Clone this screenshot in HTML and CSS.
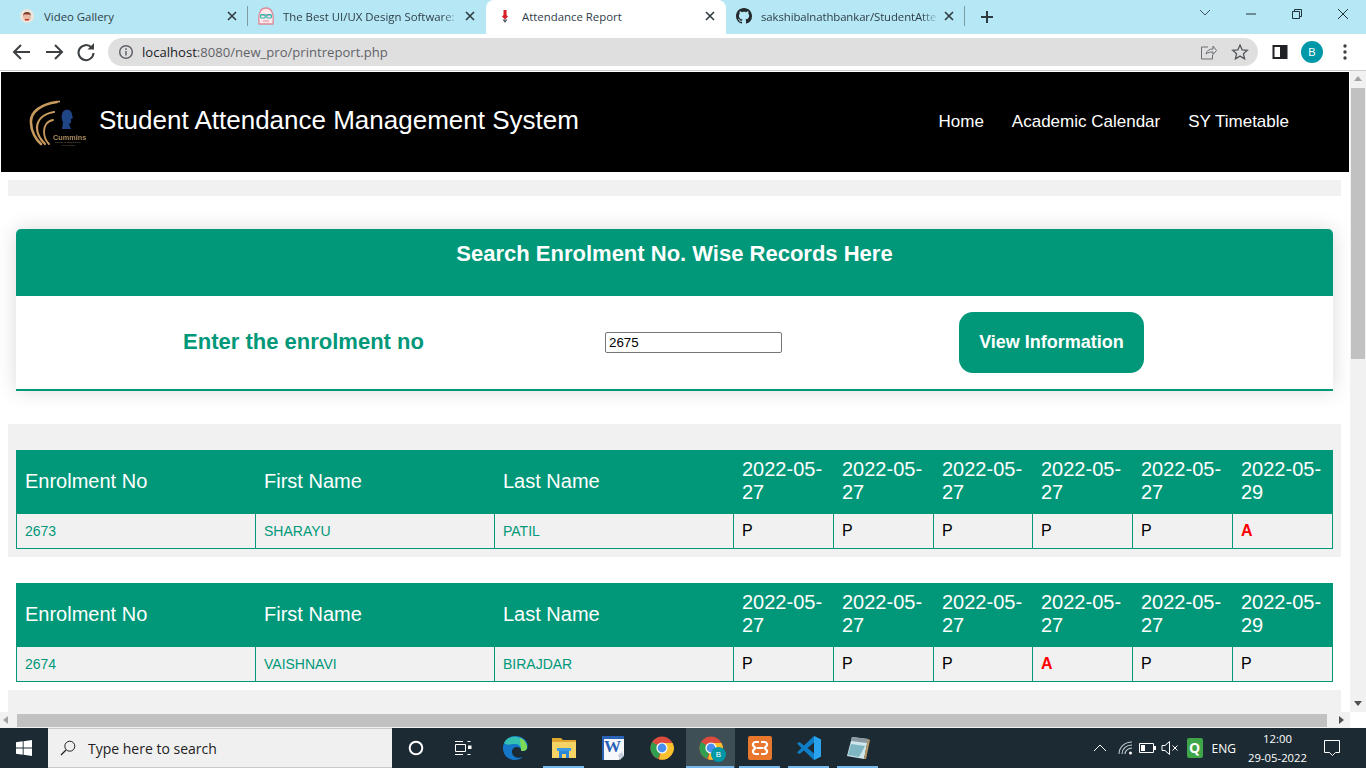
FILE: index.html
```html
<!DOCTYPE html>
<html lang="en">

<head>
    <meta charset="UTF-8">
    <title>Attendance Report</title>
    <link rel="stylesheet" href="styles.css">
</head>

<body>
    <svg class="defs" width="0" height="0">
        <symbol id="chrome" viewBox="0 0 24 24">
            <circle cx="12" cy="12" r="11.5" fill="#dd4b3e" />
            <path d="M12 12 2.2 6A11.5 11.5 0 0 0 8 22.8z" fill="#2f9e4f" />
            <path d="M12 7h10.6A11.5 11.5 0 0 1 9 23.2L12 12z" fill="#fbc02d" />
            <circle cx="12" cy="12" r="5.6" fill="#fff" />
            <circle cx="12" cy="12" r="4.4" fill="#4a8ef0" />
        </symbol>
        <symbol id="close" viewBox="0 0 10 10">
            <path d="M1 1 9 9M9 1 1 9" stroke="#2d3a40" stroke-width="1.6" fill="none" />
        </symbol>
    </svg>

    <!-- browser tabs -->
    <div class="tabstrip">
        <div class="tab tab-sep">
            <svg class="favicon" viewBox="0 0 16 16">
                <circle cx="8" cy="8" r="7" fill="#ece6dc" />
                <circle cx="8" cy="9" r="4" fill="#e9b9a4" />
                <path d="M4 8a4 4 0 0 1 8 0l-1-1.5H5z" fill="#7c3a28" />
                <rect x="6" y="11" width="4" height="1.4" fill="#c0392b" />
            </svg>
            <span class="tab-title">Video Gallery</span>
            <svg class="tab-close"><use href="#close" /></svg>
        </div>
        <div class="tab tab-two">
            <svg class="favicon favicon-big" viewBox="0 0 20 20">
                <path d="M3 18C2 8 4 2 10 2s8 6 7 16z" fill="#fbe9ec" stroke="#dc8b98" stroke-width="1.3" />
                <path d="M5 9h10" stroke="#dc8b98" stroke-width="1.2" />
                <rect x="4.6" y="8.6" width="4.6" height="3.4" rx="1" fill="none" stroke="#25b5b0" stroke-width="1.1" />
                <rect x="10.8" y="8.6" width="4.6" height="3.4" rx="1" fill="none" stroke="#25b5b0" stroke-width="1.1" />
                <path d="M7 15h6" stroke="#dc8b98" />
            </svg>
            <span class="tab-title tab-fade">The Best UI/UX Design Software:</span>
            <svg class="tab-close"><use href="#close" /></svg>
        </div>
        <div class="tab tab-active">
            <svg class="favicon" viewBox="0 0 16 16">
                <path d="M6.5 2h3v5l1.5 1.5-3 3-3-3L6.500 7z" fill="#d81f2a" />
                <path d="M5.500 11.500h5L8 15z" fill="#55606a" />
            </svg>
            <span class="tab-title">Attendance Report</span>
            <svg class="tab-close"><use href="#close" /></svg>
        </div>
        <div class="tab tab-sep">
            <svg class="favicon" viewBox="0 0 16 16">
                <path fill="#24292e" d="M8 0C3.58 0 0 3.58 0 8c0 3.54 2.29 6.53 5.47 7.59.4.07.55-.17.55-.38 0-.19-.01-.82-.01-1.49-2.01.37-2.53-.49-2.69-.94-.09-.23-.48-.94-.82-1.13-.28-.15-.68-.52-.01-.53.63-.01 1.08.58 1.23.82.72 1.21 1.87.87 2.33.66.07-.52.28-.87.51-1.07-1.78-.2-3.64-.89-3.64-3.95 0-.87.31-1.59.82-2.15-.08-.2-.36-1.02.08-2.12 0 0 .67-.21 2.2.82.64-.18 1.32-.27 2-.27.68 0 1.36.09 2 .27 1.53-1.04 2.2-.82 2.2-.82.44 1.1.16 1.92.08 2.12.51.56.82 1.27.82 2.15 0 3.07-1.87 3.75-3.65 3.95.29.25.54.73.54 1.48 0 1.07-.01 1.93-.01 2.2 0 .21.15.46.55.38A8.013 8.013 0 0 0 16 8c0-4.42-3.58-8-8-8z" />
            </svg>
            <span class="tab-title tab-fade tab-tight">sakshibalnathbankar/StudentAtte</span>
            <svg class="tab-close"><use href="#close" /></svg>
        </div>
        <svg class="new-tab" viewBox="0 0 14 14">
            <path d="M7 1v12M1 7h12" stroke="#2d3a40" stroke-width="2" fill="none" />
        </svg>
        <div class="win-controls">
            <svg viewBox="0 0 46 20"><path d="M18 6l5 5 5-5" stroke="#40525a" fill="none" /></svg>
            <svg viewBox="0 0 46 20"><path d="M18 10h10" stroke="#22333b" fill="none" /></svg>
            <svg viewBox="0 0 46 20"><path d="M18.500 7.500h7v7h-7zM20.500 7.500v-2h7v7h-2" stroke="#22333b" fill="none" /></svg>
            <svg viewBox="0 0 46 20"><path d="M18 5l10 10M28 5 18 15" stroke="#22333b" fill="none" /></svg>
        </div>
    </div>

    <!-- address bar -->
    <div class="toolbar">
        <svg class="tool" viewBox="0 0 32 32"><path d="M24 16H9M15 9l-7 7 7 7" stroke="#3c4043" stroke-width="2" fill="none" /></svg>
        <svg class="tool" viewBox="0 0 32 32"><path d="M8 16h15M17 9l7 7-7 7" stroke="#3c4043" stroke-width="2" fill="none" /></svg>
        <svg class="tool" viewBox="0 0 32 32"><path d="M21.500 11.500A7.500 7.500 0 1 0 23.500 17" stroke="#3c4043" stroke-width="2" fill="none" /><path d="M17.500 13.500h6.500V7z" fill="#3c4043" /></svg>
        <div class="omnibox">
            <svg class="info" viewBox="0 0 16 16">
                <circle cx="8" cy="8" r="6.300" stroke="#5f6368" stroke-width="1.500" fill="none" />
                <path d="M8 7v4.500M8 4.300v1.600" stroke="#5f6368" stroke-width="1.500" />
            </svg>
            <span class="url">localhost<span class="url-dim">:8080/new_pro/printreport.php</span></span>
            <svg class="omni-icon share" viewBox="0 0 18 18">
                <path d="M9 4H2.500v12h11v-4M7 11c.5-3 3-5 7-5V3l3.500 4.500L14 11.500V9c-3 0-5 .5-7 2z" stroke="#6a6e72" stroke-width="1" fill="none" />
            </svg>
            <svg class="omni-icon" viewBox="0 0 18 18">
                <path d="M9 2l2.100 4.800 5.200.5-3.900 3.400 1.200 5.100L9 13.100l-4.600 2.700 1.200-5.100-3.900-3.400 5.200-.5z" stroke="#55595d" stroke-width="1.300" fill="none" />
            </svg>
        </div>
        <svg class="tool tool-panel" viewBox="0 0 32 32"><path d="M9.500 10h13v12h-13z" stroke="#202124" stroke-width="2" fill="none" /><rect x="16" y="10" width="6.500" height="12" fill="#202124" /></svg>
        <div class="tool avatar-wrap"><span class="avatar">B</span></div>
        <svg class="tool tool-menu" viewBox="0 0 32 32"><circle cx="16" cy="10" r="1.700" fill="#3c4043" /><circle cx="16" cy="16" r="1.700" fill="#3c4043" /><circle cx="16" cy="22" r="1.700" fill="#3c4043" /></svg>
    </div>

    <!-- the page in the browser -->
    <div class="viewport">
        <div class="page-col">
            <div class="page">
                <header class="site-head">
                    <svg class="logo" viewBox="0 0 57 48">
                        <g fill="none" stroke="#c99a5e" stroke-linecap="round">
                            <path d="M28 4C12 6 1 14 2 25c0 8 5 17 10 21" stroke-width="2.600" />
                            <path d="M25 14C14 16 8 22 8 30c0 6 4 12 8 16" stroke-width="2.200" />
                            <path d="M24 22c-6 1-9 6-9 11 0 5 2 10 5 13" stroke-width="1.800" />
                        </g>
                        <circle cx="30" cy="3.500" r="1" fill="#d9ac6e" />
                        <path d="M36 12c4-1 7 1 7 5l1 3-2 1v4l-2 1 2 5h-9l1-7c-2-3-2-10 2-12z" fill="#1f4585" />
                        <text class="logo-name" x="24" y="42">Cummins</text>
                        <text class="logo-small" x="26" y="45">College of Engineering</text>
                        <text class="logo-small" x="33" y="47.500">For Women</text>
                    </svg>
                    <h1 class="site-title">Student Attendance Management System</h1>
                    <nav class="site-nav">
                        <a>Home</a>
                        <a>Academic Calendar</a>
                        <a>SY Timetable</a>
                    </nav>
                </header>

                <div class="band band-thin"></div>

                <section class="search-wrap">
                    <div class="search-card">
                        <h2 class="search-title">Search Enrolment No. Wise Records Here</h2>
                        <form class="search-form">
                            <label class="search-label" for="enrol">Enter the enrolment no</label>
                            <div class="search-cell"><input id="enrol" type="text" value="2675"></div>
                            <div class="search-cell"><button class="search-btn" type="button">View Information</button></div>
                        </form>
                    </div>
                </section>

                <section class="band">
                    <table class="report">
                        <colgroup>
                            <col class="col-first"><col class="col-name"><col class="col-name">
                            <col class="col-date"><col class="col-date"><col class="col-thin">
                            <col class="col-date"><col class="col-date"><col class="col-date">
                        </colgroup>
                        <thead>
                            <tr>
                                <th>Enrolment No</th><th>First Name</th><th>Last Name</th>
                                <th>2022-05-27</th><th>2022-05-27</th><th>2022-05-27</th>
                                <th>2022-05-27</th><th>2022-05-27</th><th>2022-05-29</th>
                            </tr>
                        </thead>
                        <tbody>
                            <tr>
                                <td class="info-cell">2673</td><td class="info-cell">SHARAYU</td><td class="info-cell">PATIL</td>
                                <td>P</td><td>P</td><td>P</td><td>P</td><td>P</td><td class="absent">A</td>
                            </tr>
                        </tbody>
                    </table>
                </section>

                <section class="band band-white">
                    <table class="report">
                        <colgroup>
                            <col class="col-first"><col class="col-name"><col class="col-name">
                            <col class="col-date"><col class="col-date"><col class="col-thin">
                            <col class="col-date"><col class="col-date"><col class="col-date">
                        </colgroup>
                        <thead>
                            <tr>
                                <th>Enrolment No</th><th>First Name</th><th>Last Name</th>
                                <th>2022-05-27</th><th>2022-05-27</th><th>2022-05-27</th>
                                <th>2022-05-27</th><th>2022-05-27</th><th>2022-05-29</th>
                            </tr>
                        </thead>
                        <tbody>
                            <tr>
                                <td class="info-cell">2674</td><td class="info-cell">VAISHNAVI</td><td class="info-cell">BIRAJDAR</td>
                                <td>P</td><td>P</td><td>P</td><td class="absent">A</td><td>P</td><td>P</td>
                            </tr>
                        </tbody>
                    </table>
                </section>

                <div class="band band-rest"></div>
            </div>
            <div class="hscroll">
                <span class="arrow arrow-left"></span>
                <span class="hthumb"></span>
                <span class="arrow arrow-right"></span>
            </div>
        </div>
        <div class="vscroll-col">
            <div class="vscroll">
                <span class="arrow arrow-up"></span>
                <span class="vthumb"></span>
                <span class="arrow arrow-down"></span>
            </div>
            <div class="corner"></div>
        </div>
    </div>

    <!-- windows taskbar -->
    <div class="taskbar">
        <div class="start">
            <svg viewBox="0 0 16 16" width="16" height="16">
                <path d="M0 2.300 6.700 1.300v6.300H0zM7.600 1.200 16 0v7.600H7.600zM0 8.500h6.700v6.300L0 13.800zM7.600 8.500H16V16l-8.400-1.200z" fill="#fff" />
            </svg>
        </div>
        <div class="search-box">
            <svg viewBox="0 0 16 16" width="16" height="16">
                <circle cx="9.800" cy="6.200" r="5" stroke="#222" fill="none" />
                <path d="M6 10 1 15" stroke="#222" stroke-width="1.200" />
            </svg>
            <span>Type here to search</span>
        </div>
        <div class="task-fixed">
            <svg viewBox="0 0 16 16" width="16" height="16"><circle cx="8" cy="8" r="6.300" stroke="#fff" stroke-width="2" fill="none" /></svg>
        </div>
        <div class="task-fixed task-view">
            <svg viewBox="0 0 18 16" width="18" height="16">
                <path d="M.5 4.500h10v7H.5zM0 1.500h8M0 14.500h8M12.500 1.500h3M12.500 14.500h3" stroke="#fff" fill="none" />
                <rect x="13" y="5.500" width="3.500" height="3.500" fill="#fff" />
            </svg>
        </div>
        <div class="task-app">
            <svg viewBox="0 0 26 26" width="26" height="26">
                <path d="M13 1A12 12 0 0 0 1 13c0 7 5 12 12 12 3 0 6-1 8-3-5 2-11 0-11-5 0-3 2-5 5-5 3 0 4 2 4 3l6-1c1-3 1-5-1-8-2-3-6-5-11-5z" fill="#1477c8" />
                <path d="M2 8c3-6 9-7 13-6 5 1 9 5 10 10 0 3-2 4-5 4-1 0-1-1-1-2 0-3-3-5-6-5-4 0-8 2-11-1z" fill="#35c1b1" />
                <path d="M18 3c4 1 7 5 7 9 0 3-2 4-5 4-1 0-1-1-1-2 0-4-1-7-1-11z" fill="#7ed957" />
            </svg>
        </div>
        <div class="task-app task-open">
            <svg viewBox="0 0 26 24" width="26" height="24">
                <path d="M1 2h9l2 2h13v4H1z" fill="#e0a72e" />
                <path d="M1 6h24v16H1z" fill="#f6d365" />
                <path d="M8 14h10v8h-3v-4h-4v4H8z" fill="#2b88d8" />
                <path d="M6 12h14v3H6z" fill="#3a9be0" />
            </svg>
        </div>
        <div class="task-app">
            <svg viewBox="0 0 24 26" width="24" height="26">
                <path d="M1 1h22v19l-5 5H1z" fill="#f5f7fb" />
                <path d="M1 1h22v3H1zM1 4h2v21H1z" fill="#2a62b5" />
                <text class="word-w" x="3" y="17">W</text>
                <path d="M17 20l4-3 2 4-4 4z" fill="#c5cfdc" />
            </svg>
        </div>
        <div class="task-app">
            <svg width="24" height="24"><use href="#chrome" /></svg>
        </div>
        <div class="task-app task-current">
            <svg width="24" height="24"><use href="#chrome" /></svg>
            <span class="task-badge">B</span>
        </div>
        <div class="task-app task-open">
            <svg viewBox="0 0 24 24" width="24" height="24">
                <rect width="24" height="24" rx="2" fill="#e8762d" />
                <path d="M11 6H7.500a2.500 2.500 0 0 0-2 4l2 2-2 2a2.500 2.500 0 0 0 2 4H11M13 6h3.500a2.500 2.500 0 0 1 2 4l-2 2 2 2a2.500 2.500 0 0 1-2 4H13M9 12h6" fill="none" stroke="#fff" stroke-width="2.200" />
            </svg>
        </div>
        <div class="task-app task-open">
            <svg viewBox="0 0 24 24" width="24" height="24">
                <path d="M17 0l7 3.500v17L17 24 7 14.500 2.500 18 0 16.500 4.500 12 0 7.500 2.500 6 7 9.500z" fill="#0f7ec7" />
                <path d="M17 6.500 10.500 12l6.500 5.500z" fill="#1c2b33" />
                <path d="M17 0l7 3.500v17L17 24z" fill="#2aa3ee" />
            </svg>
        </div>
        <div class="task-app task-open">
            <svg viewBox="0 0 24 26" width="24" height="26">
                <path d="M6 2 22 4 18 24 1 21z" fill="#cfe6ea" />
                <path d="M6 2l16 2-1 4L5 6z" fill="#8a9aa0" />
                <path d="M5 9l14 2-6 11-11-2z" fill="#7fb6c4" />
                <path d="M22 4l2 1-4 19h-2z" fill="#b89a66" />
            </svg>
        </div>

        <div class="tray">
            <svg class="tray-caret" viewBox="0 0 14 8" width="14" height="8"><path d="M1 7l6-6 6 6" stroke="#fff" fill="none" /></svg>
            <svg class="tray-wifi" viewBox="0 0 16 16" width="16" height="16">
                <g fill="none" stroke="#c9d0d3" stroke-width="1.100"><path d="M1 14C1 7 7 2 14 2" /><path d="M4 14c0-5 4-9 10-9" /><path d="M7 14c0-3 3-6 7-6" /></g>
                <circle cx="12.500" cy="13" r="1.500" fill="#fff" />
            </svg>
            <svg class="tray-batt" viewBox="0 0 18 12" width="18" height="12">
                <path d="M.5 1.500h14v9H.5z" stroke="#fff" fill="none" /><rect x="2" y="3" width="4" height="6" fill="#fff" /><rect x="15" y="4" width="2" height="4" fill="#fff" />
            </svg>
            <svg class="tray-vol" viewBox="0 0 18 16" width="18" height="16">
                <path d="M1 5.500h3L8.500 1.500v13L4 10.500H1z" stroke="#fff" fill="none" /><path d="M11.500 5.500l5 5M16.500 5.500l-5 5" stroke="#fff" />
            </svg>
            <span class="tray-q">Q</span>
            <span class="tray-lang">ENG</span>
            <div class="clock"><span>12:00</span><span>29-05-2022</span></div>
            <svg class="tray-note" viewBox="0 0 18 18" width="18" height="18">
                <path d="M1.500 1.500h15v12h-4l-3 3-3-3h-5z" stroke="#fff" fill="none" />
            </svg>
        </div>
    </div>
</body>

</html>
```

FILE: styles.css
```css
* {
    box-sizing: border-box;
}

html,
body {
    margin: 0;
    height: 768px;
    overflow: hidden;
}

body {
    display: flex;
    flex-direction: column;
    width: 1366px;
    font-family: "Liberation Sans", Arial, sans-serif;
    background: #fff;
}

.defs {
    position: absolute;
}

/* browser tabs */
.tabstrip {
    display: flex;
    align-items: center;
    height: 34px;
    padding-left: 9px;
    background: #b5e7f4;
    font-family: "Open Sans", sans-serif;
    font-size: 11.4px;
    color: #30404a;
}

.tab {
    display: flex;
    align-items: center;
    flex: none;
    width: 239px;
    height: 34px;
    padding: 0 10px 2px;
}

.tab-two {
    width: 238px;
}

.tab-sep::after {
    content: "";
    width: 1px;
    height: 20px;
    margin-left: 10px;
    margin-right: -10px;
    background: #7f9aa3;
}

.tab-active {
    width: 240px;
    padding-left: 11px;
    background: #fff;
    border-radius: 8px 8px 0 0;
}

.favicon {
    flex: none;
    width: 16px;
    height: 16px;
    margin-right: 9px;
}

.favicon-big {
    width: 20px;
    height: 20px;
    margin: 0 7px 0 -2px;
}

.tab-title {
    flex: 1;
    overflow: hidden;
    white-space: nowrap;
}

.tab-fade {
    -webkit-mask-image: linear-gradient(90deg, #000 90%, transparent);
    mask-image: linear-gradient(90deg, #000 90%, transparent);
}

.tab-tight {
    letter-spacing: -0.1px;
}

.tab-close {
    flex: none;
    width: 10px;
    height: 10px;
    margin-left: 5px;
    margin-right: 1px;
}

.tab-sep .tab-close {
    margin-right: 0;
}

.new-tab {
    width: 14px;
    height: 14px;
    margin-left: 15px;
}

.win-controls {
    display: flex;
    margin-left: auto;
    margin-top: -6px;
}

.win-controls svg {
    width: 46px;
    height: 20px;
}

/* address bar */
.toolbar {
    display: flex;
    align-items: center;
    height: 37px;
    padding: 2px 5px 2px 6px;
    background: #fff;
    border-bottom: 1px solid #ccc;
}

.tool {
    flex: none;
    width: 32px;
    height: 32px;
}

.omnibox {
    display: flex;
    align-items: center;
    width: 1150px;
    height: 28px;
    margin: 0 6px;
    padding: 0 9px 0 10px;
    background: #dfdfdf;
    border-radius: 14px;
}

.info {
    width: 16px;
    height: 16px;
    margin-right: 8px;
}

.url {
    font-family: "Open Sans", sans-serif;
    font-size: 13.1px;
    color: #202124;
}

.url-dim {
    color: #5f6368;
}

.omni-icon {
    width: 18px;
    height: 18px;
}

.share {
    margin-left: auto;
    margin-right: 14px;
}

.avatar-wrap {
    display: flex;
    align-items: center;
    justify-content: center;
}

.avatar {
    width: 22px;
    height: 22px;
    border-radius: 50%;
    background: #0097a7;
    color: #fff;
    font-size: 11px;
    line-height: 22px;
    text-align: center;
}

.tool-menu {
    margin-left: 1px;
}

/* page and its scrollbars */
.viewport {
    display: flex;
    height: 657px;
}

.page-col {
    display: flex;
    flex-direction: column;
    width: 1350px;
}

.page {
    flex: 1;
    padding-top: 1px;
    overflow: hidden;
}

.site-head {
    display: flex;
    align-items: center;
    height: 100px;
    margin: 0 1px 8px 1px;
    padding: 0 60px 0 28px;
    background: #000;
    color: #fff;
}

.logo {
    flex: none;
    width: 57px;
    height: 48px;
    margin-right: 13px;
    filter: blur(0.3px);
}

.logo-name {
    font-size: 7.300px;
    font-weight: bold;
    fill: #a98a5e;
}

.logo-small {
    font-size: 2.500px;
    fill: #8a7658;
}

.site-title {
    margin: -4px 0 0;
    font-size: 26px;
    font-weight: normal;
}

.site-nav {
    display: flex;
    gap: 28px;
    margin-left: auto;
    font-size: 17px;
}

.band {
    margin: 0 9px 0 8px;
    padding: 26px 8px 8px;
    background: #f1f1f1;
}

.band-thin {
    height: 16px;
    padding: 0;
}

.band-white {
    background: #fff;
}

.band-rest {
    height: 40px;
}

.search-wrap {
    margin: 0 9px 0 8px;
    padding: 33px 8px;
}

.search-card {
    border-radius: 5px 5px 0 0;
    border-bottom: 2px solid #009879;
    box-shadow: 0 0 20px rgba(0, 0, 0, 0.15);
}

.search-title {
    height: 67px;
    margin: 0;
    padding-top: 12px;
    background: #009879;
    border-radius: 5px 5px 0 0;
    color: #fff;
    font-size: 22px;
    line-height: 26px;
    text-align: center;
}

.search-form {
    display: grid;
    grid-template-columns: 575px 205px 511px;
    align-items: center;
    padding: 16px 0;
}

.search-label {
    padding-bottom: 2px;
    color: #009879;
    font-size: 22px;
    font-weight: bold;
    text-align: center;
}

.search-cell {
    display: flex;
    justify-content: center;
}

.search-cell input {
    width: 177px;
    height: 21px;
    padding: 1px 3px;
    border: 1px solid #767676;
    border-radius: 2px;
    font-family: "Liberation Sans", Arial, sans-serif;
    font-size: 13.333px;
}

.search-btn {
    width: 185px;
    height: 61px;
    background: #009879;
    border: 0;
    border-radius: 14px;
    color: #fff;
    font-family: "Liberation Sans", Arial, sans-serif;
    font-size: 18px;
    font-weight: bold;
}

/* report tables */
.report {
    width: 1317px;
    table-layout: fixed;
    border-collapse: separate;
    border-spacing: 0;
    color: #000;
    font-size: 16px;
}

.col-first {
    width: 240px;
}

.col-name {
    width: 239px;
}

.col-date {
    width: 100px;
}

.col-thin {
    width: 99px;
}

.report th {
    height: 64px;
    padding: 0 8px 2px;
    background: #009879;
    color: #fff;
    font-size: 20px;
    font-weight: normal;
    line-height: 23px;
    text-align: left;
}

.report th:first-child {
    padding-left: 9px;
}

.report td {
    height: 35px;
    padding: 0 8px 1px;
    background: #f1f1f1;
    border-right: 1px solid #009879;
    border-bottom: 1px solid #009879;
}

.report td:first-child {
    padding-left: 8px;
    border-left: 1px solid #009879;
}

.report .info-cell {
    padding-bottom: 0;
    color: #009879;
    font-size: 14px;
}

.report .absent {
    color: #f00;
    font-weight: bold;
}

/* fake scrollbars */
.hscroll {
    display: flex;
    align-items: center;
    flex: none;
    height: 16px;
    background: #f1f1f1;
}

.hthumb {
    width: 1310px;
    height: 13px;
    background: #c1c1c1;
}

.vscroll-col {
    display: flex;
    flex-direction: column;
    width: 16px;
}

.vscroll {
    display: flex;
    flex: 1;
    flex-direction: column;
    align-items: center;
    padding-top: 5px;
    background: #f1f1f1;
}

.vthumb {
    width: 14px;
    height: 271px;
    margin-top: 7px;
    background: #c1c1c1;
}

.corner {
    height: 16px;
    background: #fff;
}

.arrow {
    flex: none;
    width: 0;
    height: 0;
    border: 4px solid transparent;
}

.arrow-up {
    border-top: 0;
    border-bottom: 5px solid #a3a3a3;
}

.arrow-down {
    margin-top: auto;
    margin-bottom: 6px;
    border-bottom: 0;
    border-top: 5px solid #505050;
}

.arrow-left {
    margin: 0 9px 0 3px;
    border-left: 0;
    border-right: 5px solid #a3a3a3;
}

.arrow-right {
    margin-left: 12px;
    border-right: 0;
    border-left: 5px solid #505050;
}

/* taskbar */
.taskbar {
    display: flex;
    align-items: center;
    flex: none;
    height: 40px;
    background: #1c2b33;
    color: #fff;
}

.start {
    display: flex;
    align-items: center;
    justify-content: center;
    width: 48px;
    height: 40px;
}

.search-box {
    display: flex;
    align-items: center;
    gap: 12px;
    width: 344px;
    height: 40px;
    padding-left: 12px;
    background: #f0f0f0;
    border: 1px solid #c8c8c8;
    border-width: 1px 0;
    color: #222;
    font-family: "Open Sans", sans-serif;
    font-size: 14px;
}

.task-fixed {
    display: flex;
    align-items: center;
    justify-content: center;
    width: 48px;
    height: 40px;
}

.task-view {
    width: 47px;
    margin-right: 3px;
}

.task-app {
    display: flex;
    align-items: center;
    justify-content: center;
    flex: none;
    width: 49px;
    height: 40px;
    position: relative;
}

.task-open::after,
.task-current::after {
    content: "";
    position: absolute;
    left: 4px;
    right: 4px;
    bottom: 0;
    height: 2px;
    background: #76b9ed;
}

.task-current {
    background: #3e4f56;
}

.task-current::after {
    left: 0;
    right: 1px;
}

.task-badge {
    position: absolute;
    left: 25px;
    top: 19px;
    width: 15px;
    height: 15px;
    border-radius: 50%;
    background: #0097a7;
    font-size: 8px;
    line-height: 15px;
    text-align: center;
}

.word-w {
    font-family: "Liberation Serif", serif;
    font-size: 17px;
    font-weight: bold;
    fill: #2a62b5;
}

.tray {
    display: flex;
    align-items: center;
    margin-left: auto;
    height: 40px;
    padding-right: 25px;
    font-family: "Open Sans", sans-serif;
    font-size: 12px;
}

.tray-caret {
    margin-right: 11px;
}

.tray-wifi {
    margin-right: 5px;
}

.tray-batt {
    margin-right: 4px;
}

.tray-vol {
    margin-right: 8px;
}

.tray-q {
    width: 16px;
    height: 20px;
    margin-right: 9px;
    background: #3ea648;
    border-radius: 2px;
    font-size: 14px;
    font-weight: bold;
    line-height: 20px;
    text-align: center;
}

.tray-lang {
    margin-right: 12px;
}

.clock {
    display: flex;
    flex-direction: column;
    align-items: center;
    gap: 2px;
    margin-right: 16px;
    font-size: 11.300px;
    line-height: 17px;
}

.tray-note {
    flex: none;
}
```
